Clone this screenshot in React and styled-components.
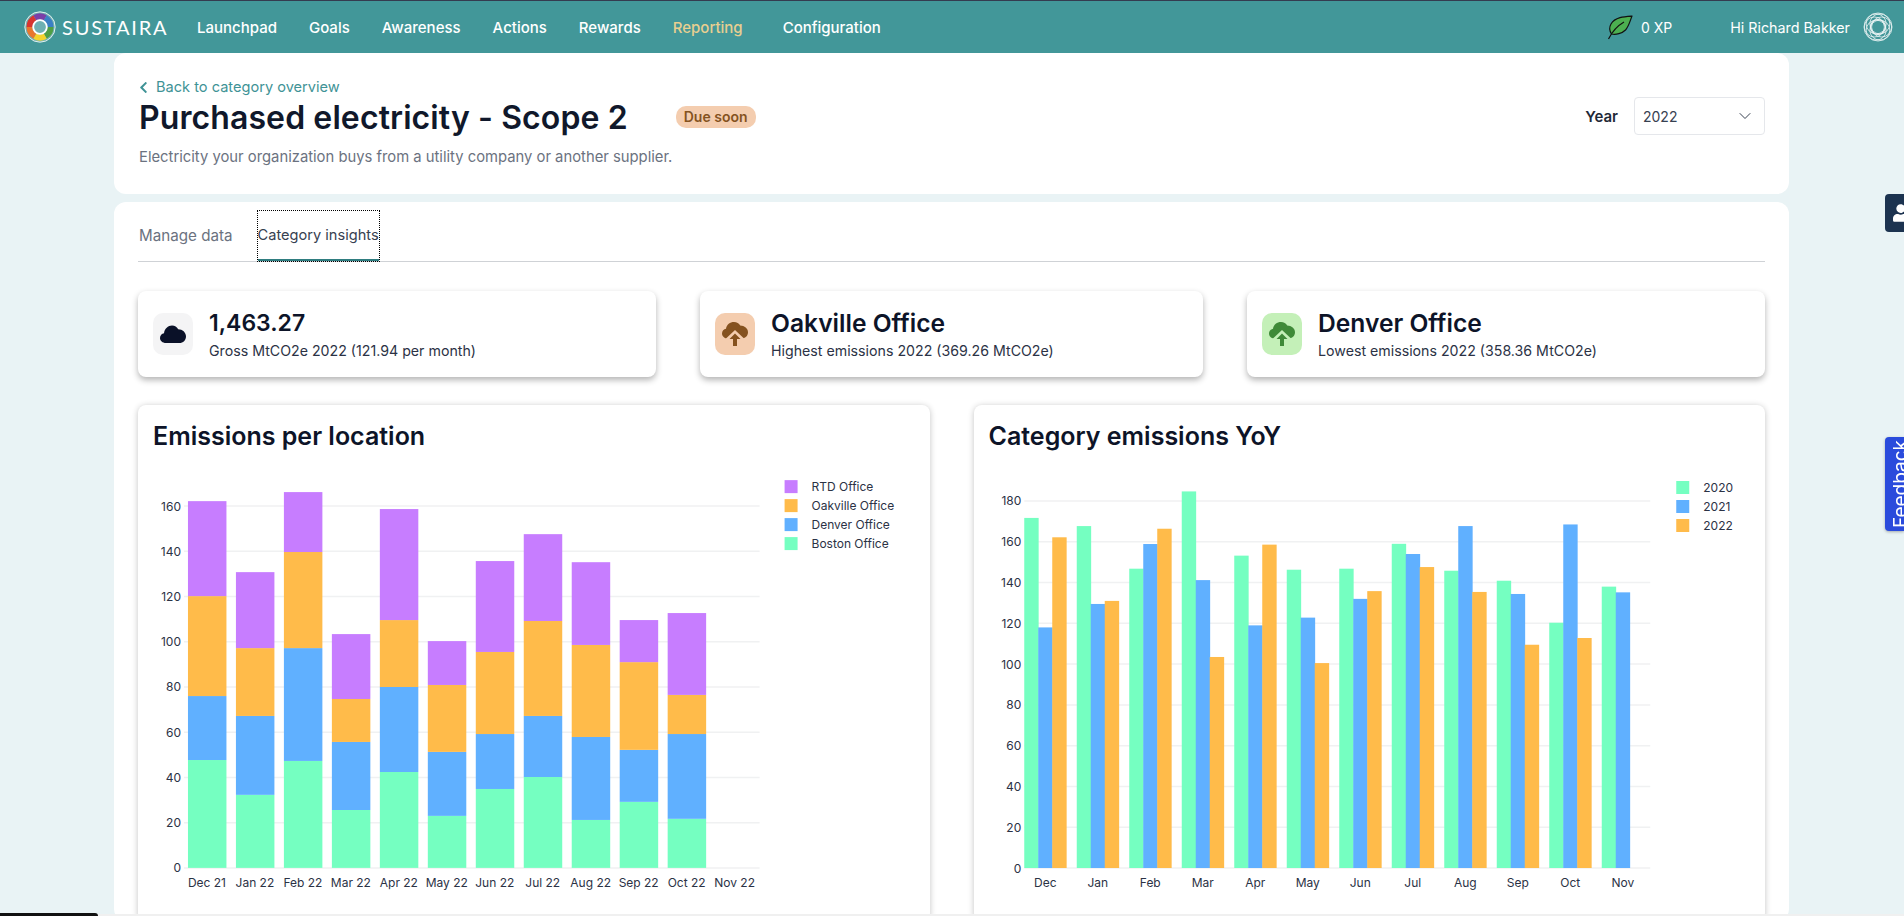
import React from 'react';
import styled, { createGlobalStyle } from 'styled-components';
import { FaChevronLeft, FaUserCog } from 'react-icons/fa';
import { ChevronDown } from 'lucide-react';

const FONT = 'Inter, "Open Sans", sans-serif';

const GlobalStyle = createGlobalStyle`
  html, body {
    margin: 0;
    padding: 0;
    height: 100%;
    overflow: hidden;
    background: #e9f3f5;
    font-family: ${FONT};
  }
`;

const Page = styled.div`
  height: 916px;
  overflow: hidden;
`;

const Header = styled.header`
  height: 53px;
  box-sizing: border-box;
  border-top: 1px solid #343b4f;
  background: #429799;
  display: flex;
  align-items: center;
  padding: 0 11px 0 24px;
`;

const Brand = styled.div`
  display: flex;
  align-items: center;
  gap: 6px;
  width: 173px;
`;

const BrandName = styled.span`
  color: #fff;
  font-family: Lato, sans-serif;
  font-size: 20px;
  letter-spacing: 1.8px;
`;

const Nav = styled.nav`
  display: flex;
  align-items: center;
  gap: 32px;
`;

const NavItem = styled.a`
  color: ${(p) => (p.$active ? '#e8cf90' : '#fff')};
  font-size: 15px;
  font-weight: 500;
  margin-left: ${(p) => (p.$spaced ? '8px' : '0')};
`;

const HeaderRight = styled.div`
  margin-left: auto;
  display: flex;
  align-items: center;
  color: #fff;
  font-size: 14px;
`;

const Xp = styled.span`
  margin: 0 58px 0 8px;
`;

const Greeting = styled.span`
  margin-right: 13px;
  font-size: 14.3px;
`;

const Main = styled.main`
  margin: 0 115px 0 114px;
`;

const TopPanel = styled.section`
  height: 141px;
  box-sizing: border-box;
  background: #fff;
  border-radius: 12px;
  padding: 24px 24px 0 25px;
  display: flex;
  justify-content: space-between;
`;

const BackLink = styled.a`
  display: flex;
  align-items: center;
  gap: 6px;
  height: 20px;
  color: #3f9396;
  font-size: 14.6px;
`;

const BackIcon = styled(FaChevronLeft)`
  margin-left: -2px;
`;

const TitleRow = styled.div`
  display: flex;
  align-items: center;
  gap: 48px;
  height: 40px;
`;

const Title = styled.h1`
  margin: 0;
  color: #10182b;
  font-size: 32px;
  font-weight: 600;
  letter-spacing: 0.1px;
`;

const Badge = styled.span`
  background: #f4cdaf;
  color: #85531f;
  border-radius: 10px;
  font-size: 14px;
  font-weight: 600;
  line-height: 22px;
  padding: 0 8px;
`;

const Description = styled.p`
  margin: 10px 0 0;
  color: #6b7280;
  font-size: 14.8px;
  line-height: 20px;
`;

const YearPicker = styled.div`
  display: flex;
  align-items: center;
  gap: 16px;
  height: 38px;
  margin-top: 20px;
`;

const YearLabel = styled.span`
  color: #1f2937;
  font-size: 15px;
  font-weight: 600;
`;

const YearSelect = styled.div`
  width: 131px;
  height: 38px;
  box-sizing: border-box;
  border: 1px solid #e5e7eb;
  border-radius: 4px;
  padding: 0 9px 0 8px;
  display: flex;
  align-items: center;
  justify-content: space-between;
  color: #374151;
  font-size: 14px;
`;

const ContentPanel = styled.section`
  margin-top: 8px;
  background: #fff;
  border-radius: 12px;
  padding: 9px 24px 0;
`;

const Tabs = styled.div`
  display: flex;
  gap: 25px;
  border-bottom: 1px solid #cfd2d6;
  padding-left: 1px;
`;

const Tab = styled.div`
  height: 50px;
  box-sizing: border-box;
  display: flex;
  align-items: center;
  color: ${(p) => (p.$active ? '#374151' : '#6b7280')};
  font-size: ${(p) => (p.$active ? '14.6px' : '15.2px')};
  border-bottom: 2px solid ${(p) => (p.$active ? '#2f7d80' : 'transparent')};
  outline: ${(p) => (p.$active ? '1px dotted #000' : 'none')};
`;

const KpiRow = styled.div`
  display: grid;
  grid-template-columns: 518px 1fr 518px;
  gap: 44px;
  margin-top: 29px;
`;

const KpiCard = styled.div`
  height: 86px;
  box-sizing: border-box;
  background: #fff;
  border-radius: 8px;
  box-shadow: 0 3px 6px rgba(0, 0, 0, 0.3);
  padding: 0 15px;
  display: flex;
  align-items: center;
  gap: 16px;
`;

const KpiIcon = styled.div`
  width: 40px;
  height: 42px;
  flex: none;
  border-radius: 10px;
  background: ${(p) => p.$bg};
  color: ${(p) => p.$fg};
  display: flex;
  align-items: center;
  justify-content: center;
`;

const KpiValue = styled.div`
  color: #0d1428;
  font-size: ${(p) => (p.$name ? '24.6px' : '23px')};
  font-weight: 600;
  line-height: 30px;
`;

const KpiLabel = styled.div`
  color: #2b3245;
  font-size: 14.2px;
  line-height: 20px;
  margin-top: 3px;
`;

const ChartRow = styled.div`
  display: grid;
  grid-template-columns: 1fr 1fr;
  gap: 44px;
  margin-top: 28px;
`;

const ChartCard = styled.div`
  background: #fff;
  border-radius: 8px;
  box-shadow: 0 1px 6px rgba(0, 0, 0, 0.24);
  padding-top: 16px;
`;

const ChartTitle = styled.h2`
  margin: 0 0 0 15px;
  color: #0d1428;
  font-size: 25px;
  font-weight: 600;
  line-height: 30px;
`;

const ChartSvg = styled.svg`
  display: block;
  width: 100%;
  font-family: ${FONT};
  font-size: 12px;
  fill: #2b3245;
`;

const SideTab = styled.div`
  position: fixed;
  right: 0;
  top: 194px;
  width: 19px;
  height: 38px;
  background: #1c3350;
  border-radius: 4px 0 0 4px;
  overflow: hidden;
  color: #fff;
  display: flex;
  align-items: center;
  padding-left: 8px;
  box-sizing: border-box;
`;

const SideIcon = styled(FaUserCog)`
  flex: none;
`;

const FeedbackTab = styled.div`
  position: fixed;
  right: 0;
  top: 437px;
  width: 19px;
  height: 94px;
  background: #2a4bdc;
  border-radius: 4px 0 0 4px;
  box-shadow: 0 1px 3px rgba(0, 0, 0, 0.3);
  overflow: hidden;
  box-sizing: border-box;
  padding-left: 6px;
`;

const FeedbackText = styled.span`
  display: block;
  height: 94px;
  writing-mode: vertical-rl;
  transform: rotate(180deg);
  text-align: center;
  color: #fff;
  font-size: 19px;
  line-height: 20px;
`;

const ScrollTrack = styled.div`
  position: fixed;
  left: 0;
  right: 0;
  bottom: 0;
  height: 2px;
  background: #f0f0f0;
`;

const ScrollThumb = styled.div`
  position: fixed;
  left: 0;
  bottom: 0;
  width: 98px;
  height: 3px;
  background: #111;
  border-radius: 0 3px 0 0;
`;

const PURPLE = '#c77dff';
const ORANGE = '#ffbb4a';
const BLUE = '#60b0ff';
const MINT = '#75ffc1';

// cumulative tops of each stack: boston, denver, oakville, rtd
const LOCATION_DATA = [
  ['Dec 21', 47.7, 76, 120.2, 162.2],
  ['Jan 22', 32.3, 67.2, 97.2, 130.8],
  ['Feb 22', 47.3, 97.2, 139.7, 166.2],
  ['Mar 22', 25.6, 55.7, 74.7, 103.4],
  ['Apr 22', 42.4, 80, 109.6, 158.7],
  ['May 22', 23, 51.3, 80.9, 100.3],
  ['Jun 22', 34.9, 59.2, 95.5, 135.7],
  ['Jul 22', 40.2, 67.2, 109.2, 147.6],
  ['Aug 22', 21.2, 57.9, 98.6, 135.2],
  ['Sep 22', 29.2, 52.2, 91, 109.6],
  ['Oct 22', 21.7, 59.2, 76.5, 112.7],
  ['Nov 22', 0, 0, 0, 0],
];

const YOY_DATA = [
  ['Dec', 171.7, 118, 162.2],
  ['Jan', 167.7, 129.5, 131],
  ['Feb', 146.8, 158.9, 166.4],
  ['Mar', 184.7, 141.2, 103.5],
  ['Apr', 153.2, 119, 158.6],
  ['May', 146.3, 122.8, 100.5],
  ['Jun', 146.8, 132, 135.8],
  ['Jul', 159, 154, 147.6],
  ['Aug', 145.8, 167.7, 135.4],
  ['Sep', 140.9, 134.4, 109.5],
  ['Oct', 120.3, 168.5, 112.8],
  ['Nov', 138, 135.2, 0],
];

const LOCATION_LEGEND = [
  ['RTD Office', PURPLE],
  ['Oakville Office', ORANGE],
  ['Denver Office', BLUE],
  ['Boston Office', MINT],
];

const YOY_LEGEND = [
  ['2020', MINT],
  ['2021', BLUE],
  ['2022', ORANGE],
];

function Legend({ items, x, y }) {
  return items.map(([name, color], i) => (
    <g key={name}>
      <rect x={x} y={y + i * 19 - 6} width={13} height={13} fill={color} />
      <text x={x + 27} y={y + i * 19 + 4.5}>{name}</text>
    </g>
  ));
}

function Axis({ ticks, step, zeroY, unit, left, right }) {
  return ticks.map((t, i) => {
    const y = zeroY - (i * unit);
    return (
      <g key={t}>
        <line x1={left} x2={right} y1={y} y2={y} stroke="#f0f1f2" strokeWidth="1.5" />
        <text x={left - 3} y={y + 4.5} textAnchor="end">{i * step}</text>
      </g>
    );
  });
}

function StackedChart() {
  const zeroY = 869;
  const scale = 362 / 160;
  const colors = [MINT, BLUE, ORANGE, PURPLE];
  return (
    <ChartSvg viewBox="138 452 792 470" height="470">
      <Axis ticks={[0, 1, 2, 3, 4, 5, 6, 7, 8]} step={20} zeroY={zeroY} unit={45.25} left={184} right={760} />
      {LOCATION_DATA.map(([label, ...tops], i) => {
        const x = 188 + i * 48;
        return (
          <g key={label}>
            {tops.map((top, j) => {
              const prev = j ? tops[j - 1] : 0;
              return (
                <rect
                  key={j}
                  x={x}
                  y={zeroY - top * scale}
                  width={38.5}
                  height={(top - prev) * scale}
                  fill={colors[j]}
                />
              );
            })}
            <text x={x + 19} y={880 + 8} textAnchor="middle">{label}</text>
          </g>
        );
      })}
      <Legend items={LOCATION_LEGEND} x={785} y={487} />
    </ChartSvg>
  );
}

function GroupedChart() {
  const zeroY = 869;
  const scale = 367 / 180;
  const colors = [MINT, BLUE, ORANGE];
  return (
    <ChartSvg viewBox="974 452 791 470" height="470">
      <Axis ticks={[0, 1, 2, 3, 4, 5, 6, 7, 8, 9]} step={20} zeroY={zeroY} unit={40.78} left={1024} right={1650} />
      {YOY_DATA.map(([label, ...values], i) => {
        const x = 1024 + i * 52.5;
        return (
          <g key={label}>
            {values.map((v, j) => (
              <rect
                key={j}
                x={x + j * 14}
                y={zeroY - v * scale}
                width={14.4}
                height={v * scale}
                fill={colors[j]}
              />
            ))}
            <text x={x + 21} y={888} textAnchor="middle">{label}</text>
          </g>
        );
      })}
      <Legend items={YOY_LEGEND} x={1676} y={488} />
    </ChartSvg>
  );
}

function SustairaLogo() {
  // one thick arc per colour around the ring
  const arcs = [
    ['#7b3fa8', -120, -60],
    ['#3b7fc4', -60, 0],
    ['#4f9e45', 0, 60],
    ['#f3d32c', 60, 120],
    ['#e8772e', 120, 180],
    ['#d8342f', 180, 240],
  ];
  const pt = (deg, r) => [16 + r * Math.cos((deg * Math.PI) / 180), 16 + r * Math.sin((deg * Math.PI) / 180)];
  return (
    <svg width="32" height="32" viewBox="0 0 32 32" fill="none">
      <circle cx="16" cy="16" r="15.2" fill="#fff" fillOpacity="0.25" stroke="#fff" strokeWidth="0.8" />
      {arcs.map(([color, a, b]) => {
        const [x1, y1] = pt(a, 10.5);
        const [x2, y2] = pt(b, 10.5);
        return <path key={color} d={`M${x1} ${y1}A10.500 10.500 0 0 1 ${x2} ${y2}`} stroke={color} strokeWidth="6" />;
      })}
      <circle cx="16" cy="16" r="6.800" fill="#6fb0b2" stroke="#fff" strokeWidth="1.8" />
    </svg>
  );
}

function UserLogo() {
  const offsets = [0, 60, 120, 180, 240, 300];
  return (
    <svg width="30" height="30" viewBox="0 0 30 30" fill="none" stroke="#fff" strokeWidth="0.8" opacity="0.9">
      <circle cx="15" cy="15" r="14" />
      <circle cx="15" cy="15" r="7.5" strokeWidth="1.2" />
      {offsets.map((deg) => (
        <circle
          key={deg}
          cx={15 + 3.6 * Math.cos((deg * Math.PI) / 180)}
          cy={15 + 3.6 * Math.sin((deg * Math.PI) / 180)}
          r="10"
        />
      ))}
    </svg>
  );
}

function Leaf() {
  return (
    <svg width="26" height="25" viewBox="0 0 26 25">
      <path
        d="M25 1C18 1.5 8 2 4 9C2 12.500 2.500 16 4.500 19C9 20 15 18.500 18.500 15C22 11 23 6 25 1Z"
        fill="#4caf50"
        stroke="#111"
        strokeWidth="1.2"
        strokeLinejoin="round"
      />
      <path d="M1.500 24C5 17 10 11 17 7" fill="none" stroke="#111" strokeWidth="1.2" />
    </svg>
  );
}

function Cloud() {
  return (
    <svg width="26" height="18" viewBox="0 0 26 18" fill="currentColor">
      <path d="M6 18C2.500 18 0 15.800 0 13C0 10.500 1.800 8.800 4 8.300C4.600 3.600 8 0.500 12 0.500C14.800 0.500 17 2 18.200 4.300C22.500 4.300 26 7.500 26 11.500C26 15.300 23 18 19.500 18Z" />
    </svg>
  );
}

function CloudArrow({ bg }) {
  return (
    <svg width="26" height="24" viewBox="0 0 26 24" fill="currentColor">
      <path d="M6 16.500C2.500 16.500 0 14.400 0 11.500C0 9 1.800 7.300 4 6.800C4.600 2.600 8 0 12 0C14.800 0 17 1.300 18.200 3.500C22.500 3.500 26 6.500 26 10.200C26 14 23 16.500 19.500 16.500Z" />
      <path d="M4 16.500L13 8L22 16.500V19H4Z" fill={bg} />
      <path d="M13 11.500L18.500 17H15V24H11V17H7.500Z" />
    </svg>
  );
}

const NAV_ITEMS = ['Launchpad', 'Goals', 'Awareness', 'Actions', 'Rewards'];

export default function App() {
  return (
    <Page>
      <GlobalStyle />
      <Header>
        <Brand>
          <SustairaLogo />
          <BrandName>SUSTAIRA</BrandName>
        </Brand>
        <Nav>
          {NAV_ITEMS.map((item) => <NavItem key={item}>{item}</NavItem>)}
          <NavItem $active>Reporting</NavItem>
          <NavItem $spaced>Configuration</NavItem>
        </Nav>
        <HeaderRight>
          <Leaf />
          <Xp>0 XP</Xp>
          <Greeting>Hi Richard Bakker</Greeting>
          <UserLogo />
        </HeaderRight>
      </Header>
      <Main>
        <TopPanel>
          <div>
            <BackLink><BackIcon size={13} />Back to category overview</BackLink>
            <TitleRow>
              <Title>Purchased electricity - Scope 2</Title>
              <Badge>Due soon</Badge>
            </TitleRow>
            <Description>Electricity your organization buys from a utility company or another supplier.</Description>
          </div>
          <YearPicker>
            <YearLabel>Year</YearLabel>
            <YearSelect>2022<ChevronDown size={20} strokeWidth={1.2} /></YearSelect>
          </YearPicker>
        </TopPanel>
        <ContentPanel>
          <Tabs>
            <Tab>Manage data</Tab>
            <Tab $active>Category insights</Tab>
          </Tabs>
          <KpiRow>
            <KpiCard>
              <KpiIcon $bg="#f4f4f5" $fg="#0a1128"><Cloud /></KpiIcon>
              <div>
                <KpiValue>1,463.27</KpiValue>
                <KpiLabel>Gross MtCO2e 2022 (121.94 per month)</KpiLabel>
              </div>
            </KpiCard>
            <KpiCard>
              <KpiIcon $bg="#f4cdaf" $fg="#85521f"><CloudArrow bg="#f4cdaf" /></KpiIcon>
              <div>
                <KpiValue $name>Oakville Office</KpiValue>
                <KpiLabel>Highest emissions 2022 (369.26 MtCO2e)</KpiLabel>
              </div>
            </KpiCard>
            <KpiCard>
              <KpiIcon $bg="#c4f0b8" $fg="#3f8a38"><CloudArrow bg="#c4f0b8" /></KpiIcon>
              <div>
                <KpiValue $name>Denver Office</KpiValue>
                <KpiLabel>Lowest emissions 2022 (358.36 MtCO2e)</KpiLabel>
              </div>
            </KpiCard>
          </KpiRow>
          <ChartRow>
            <ChartCard>
              <ChartTitle>Emissions per location</ChartTitle>
              <StackedChart />
            </ChartCard>
            <ChartCard>
              <ChartTitle>Category emissions YoY</ChartTitle>
              <GroupedChart />
            </ChartCard>
          </ChartRow>
        </ContentPanel>
      </Main>
      <SideTab><SideIcon size={22} /></SideTab>
      <FeedbackTab><FeedbackText>Feedback</FeedbackText></FeedbackTab>
      <ScrollTrack />
      <ScrollThumb />
    </Page>
  );
}
